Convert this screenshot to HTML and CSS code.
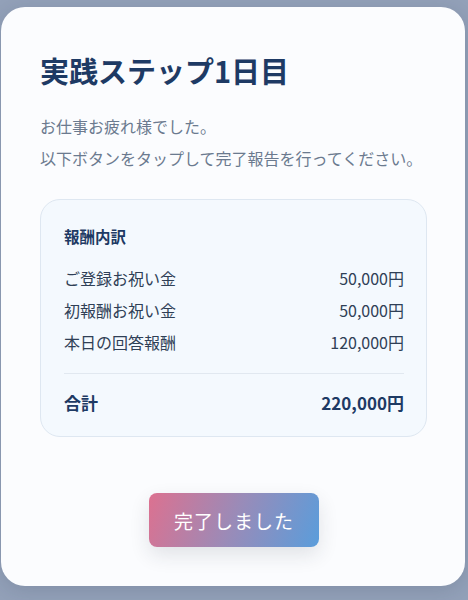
FILE: index.html
```html
<!DOCTYPE html>
<html lang="ja">
<head>
    <meta charset="UTF-8">
    <meta name="viewport" content="width=device-width, initial-scale=1.0">
    <title>実践ステップ1日目</title>
    <link rel="stylesheet" href="styles.css">
</head>
<body>
    <!-- 完了報告モーダル -->
    <div class="overlay">
        <div class="modal">
            <h1>実践ステップ1日目</h1>
            <p class="lead">お仕事お疲れ様でした。<br>以下ボタンをタップして完了報告を行ってください。</p>

            <div class="breakdown">
                <h2>報酬内訳</h2>
                <div class="row"><span>ご登録お祝い金</span><span>50,000円</span></div>
                <div class="row"><span>初報酬お祝い金</span><span>50,000円</span></div>
                <div class="row"><span>本日の回答報酬</span><span>120,000円</span></div>
                <div class="row total"><span>合計</span><span>220,000円</span></div>
            </div>

            <div class="actions">
                <button class="done-btn">完了しました</button>
            </div>
        </div>
    </div>
</body>
</html>
```

FILE: styles.css
```css
html, body {
    margin: 0;
    height: 100%;
}
body {
    font-family: "Noto Sans CJK JP", "Noto Sans", sans-serif;
    background-color: #93a1b9;
    color: #334155;
}
.overlay {
    padding: 7px 3px 0 1px;
}
.modal {
    box-sizing: border-box;
    height: 579px;
    background: #fbfcfe;
    border-radius: 24px;
    padding: 43px 40px 38px 39px;
    box-shadow: 0 4px 20px rgba(30, 41, 59, 0.15);
}
h1 {
    margin: 0;
    font-size: 29px;
    line-height: 40px;
    font-weight: 700;
    color: #1e3a64;
}
.lead {
    margin: 20px 0 0;
    font-size: 16px;
    line-height: 32px;
    color: #6b7a8f;
}
.breakdown {
    margin-top: 25px;
    margin-right: -2px;
    background: #f4f9fe;
    border: 1px solid #dee7f1;
    border-radius: 20px;
    padding: 25px 22px 20px 23px;
}
h2 {
    margin: 0 0 19px;
    font-size: 15.5px;
    line-height: 22px;
    font-weight: 700;
    color: #1e3a64;
}
.row {
    display: flex;
    justify-content: space-between;
    font-size: 16px;
    line-height: 24px;
    color: #2f3f56;
    margin-bottom: 8px;
}
.row.total {
    margin: 19px 0 0;
    padding-top: 16px;
    border-top: 1px solid #e1e8f0;
    font-size: 17px;
    line-height: 26px;
    font-weight: 700;
    color: #1e3a64;
}
.actions {
    display: flex;
    justify-content: center;
    margin-top: 56px;
    padding-left: 3px;
}
.done-btn {
    width: 170px;
    height: 54px;
    border: none;
    border-radius: 8px;
    background: linear-gradient(110deg, #dc7190 0%, #9a8bb8 50%, #5a9ddb 100%);
    color: #fff;
    font-family: inherit;
    font-size: 19px;
    letter-spacing: 1px;
    cursor: pointer;
    box-shadow: 0 8px 20px rgba(30, 41, 59, 0.12);
}
```
